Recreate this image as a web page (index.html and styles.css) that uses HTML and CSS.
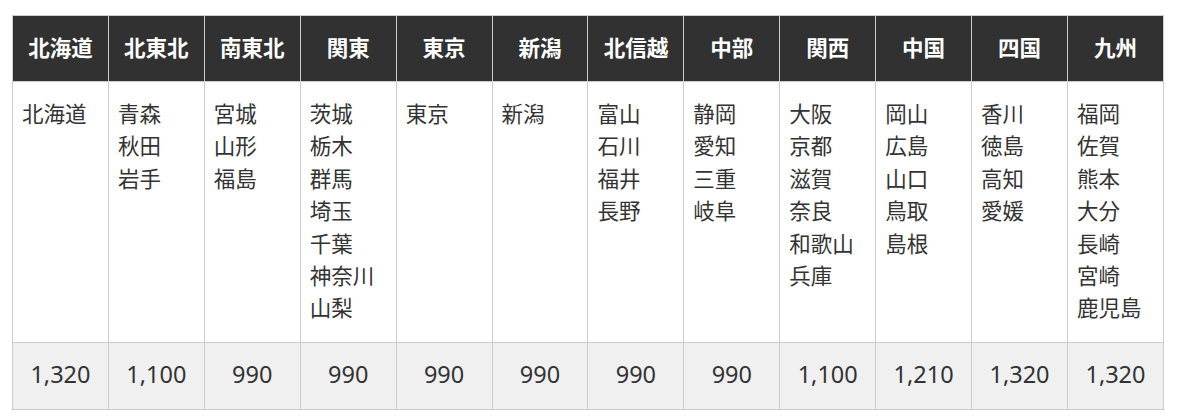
FILE: index.html
```html
<!DOCTYPE html>
<html lang="ja">
<head>
<meta charset="utf-8">
<link rel="stylesheet" href="styles.css">
</head>
<body>
<div class="wrap">
<table class="fare">
  <thead>
    <tr>
      <th>北海道</th><th>北東北</th><th>南東北</th><th>関東</th><th>東京</th><th>新潟</th><th>北信越</th><th>中部</th><th>関西</th><th>中国</th><th>四国</th><th>九州</th>
    </tr>
  </thead>
  <tbody>
    <tr class="areas">
      <td>北海道</td>
      <td>青森<br>秋田<br>岩手</td>
      <td>宮城<br>山形<br>福島</td>
      <td>茨城<br>栃木<br>群馬<br>埼玉<br>千葉<br>神奈川<br>山梨</td>
      <td>東京</td>
      <td>新潟</td>
      <td>富山<br>石川<br>福井<br>長野</td>
      <td>静岡<br>愛知<br>三重<br>岐阜</td>
      <td>大阪<br>京都<br>滋賀<br>奈良<br>和歌山<br>兵庫</td>
      <td>岡山<br>広島<br>山口<br>鳥取<br>島根</td>
      <td>香川<br>徳島<br>高知<br>愛媛</td>
      <td>福岡<br>佐賀<br>熊本<br>大分<br>長崎<br>宮崎<br>鹿児島</td>
    </tr>
    <tr class="prices">
      <td>1,320</td><td>1,100</td><td>990</td><td>990</td><td>990</td><td>990</td><td>990</td><td>990</td><td>1,100</td><td>1,210</td><td>1,320</td><td>1,320</td>
    </tr>
  </tbody>
</table>
</div>
</body>
</html>
```

FILE: styles.css
```css
html, body {
  margin: 0;
  padding: 0;
  background: #ffffff;
}
.wrap {
  padding: 15px 12px;
}
.fare {
  width: 1152px;
  table-layout: fixed;
  border-collapse: collapse;
  font-family: "Noto Sans CJK JP", "Noto Sans", sans-serif;
  font-size: 21.5px;
  line-height: 32.4px;
  color: #333333;
}
.fare th,
.fare td {
  border: 1px solid #cccccc;
  padding: 14.5px 9px 18.5px;
  vertical-align: top;
}
.fare th {
  background: #313131;
  color: #ffffff;
  font-weight: 700;
  text-align: center;
  vertical-align: middle;
}
.areas td {
  text-align: left;
}
.prices td {
  background: #f0f0f0;
  text-align: center;
  vertical-align: middle;
  font-family: "Noto Sans", sans-serif;
  font-size: 23.5px;
  color: #333333;
}
```
